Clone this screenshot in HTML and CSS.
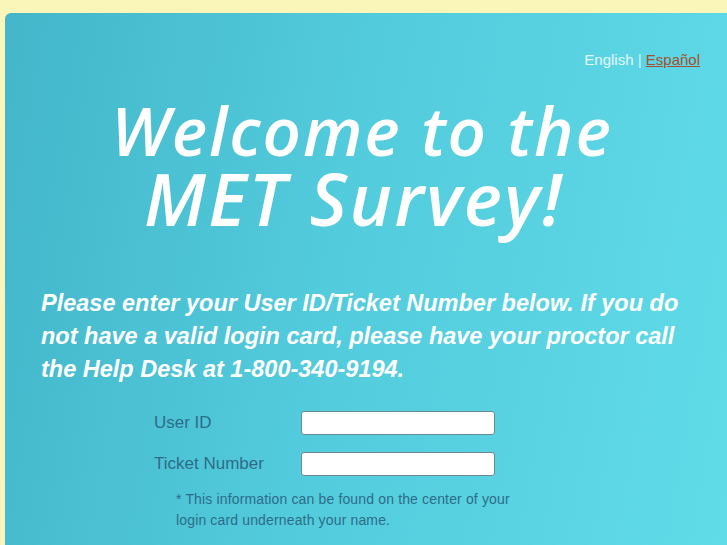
FILE: index.html
```html
<!DOCTYPE html>
<html>
<head>
<meta charset="utf-8">
<link rel="stylesheet" href="styles.css">
</head>
<body>
<div class="panel">
  <div class="lang"><span class="cur">English</span> <span class="sep">|</span> <a href="#" class="alt">Español </a></div>
  <h1 class="title"><span class="t1">Welcome to the</span><span class="t2">MET Survey!</span></h1>
  <p class="intro">Please enter your User ID/Ticket Number below. If you do not have a valid login card, please have your proctor call the Help Desk at 1-800-340-9194.</p>
  <form class="login">
    <div class="row"><label class="lbl">User ID</label><input class="field" type="text"></div>
    <div class="row"><label class="lbl">Ticket Number</label><input class="field" type="text"></div>
    <p class="note">* This information can be found on the center of your<br>login card underneath your name.</p>
  </form>
</div>
</body>
</html>
```
FILE: styles.css
```css
html, body { margin: 0; padding: 0; }
body {
  background: #faf5b9;
  width: 727px;
  height: 545px;
  overflow: hidden;
  font-family: "Liberation Sans", Arial, sans-serif;
}
.panel {
  margin: 13px 0 0 5px;
  height: 532px;
  overflow: hidden;
  border-top-left-radius: 6px;
  background: linear-gradient(100deg, #43b6ca 0%, #52cbdc 45%, #60dbe8 100%);
}
.lang {
  text-align: right;
  padding: 38px 27px 0 0;
  font-size: 15px;
  color: #e4f8fb;
  line-height: 18px;
}
.sep { color: #d8f2f6; }
.alt { color: #a5502e; text-decoration: underline; }
.title {
  margin: 27px 0 0 0;
  text-align: center;
  font-family: "Open Sans", sans-serif;
  font-style: italic;
  font-weight: 600;
  color: #ffffff;
}
.t1, .t2 { display: block; height: 68px; line-height: 68px; }
.t1 { font-size: 67px; letter-spacing: 1.9px; padding-right: 8px; }
.t2 { font-size: 72px; letter-spacing: 2.5px; padding-right: 24px; }
.intro {
  margin: 55px 40px 0 36px;
  font-weight: bold;
  font-style: italic;
  font-size: 23.5px;
  line-height: 33px;
  color: #ffffff;
}
.login { margin: 25px 0 0 149px; }
.row { display: flex; align-items: center; height: 24px; margin-bottom: 17px; }
.lbl { width: 147px; font-size: 17px; color: #2d6c88; }
.field {
  width: 194px; height: 24px; box-sizing: border-box;
  border: 1px solid #6a8a93; border-radius: 3px; background: #fff;
}
.note {
  margin: -4px 0 0 22px;
  font-size: 14px;
  letter-spacing: 0.15px;
  line-height: 21px;
  color: #2d6c88;
}
```
